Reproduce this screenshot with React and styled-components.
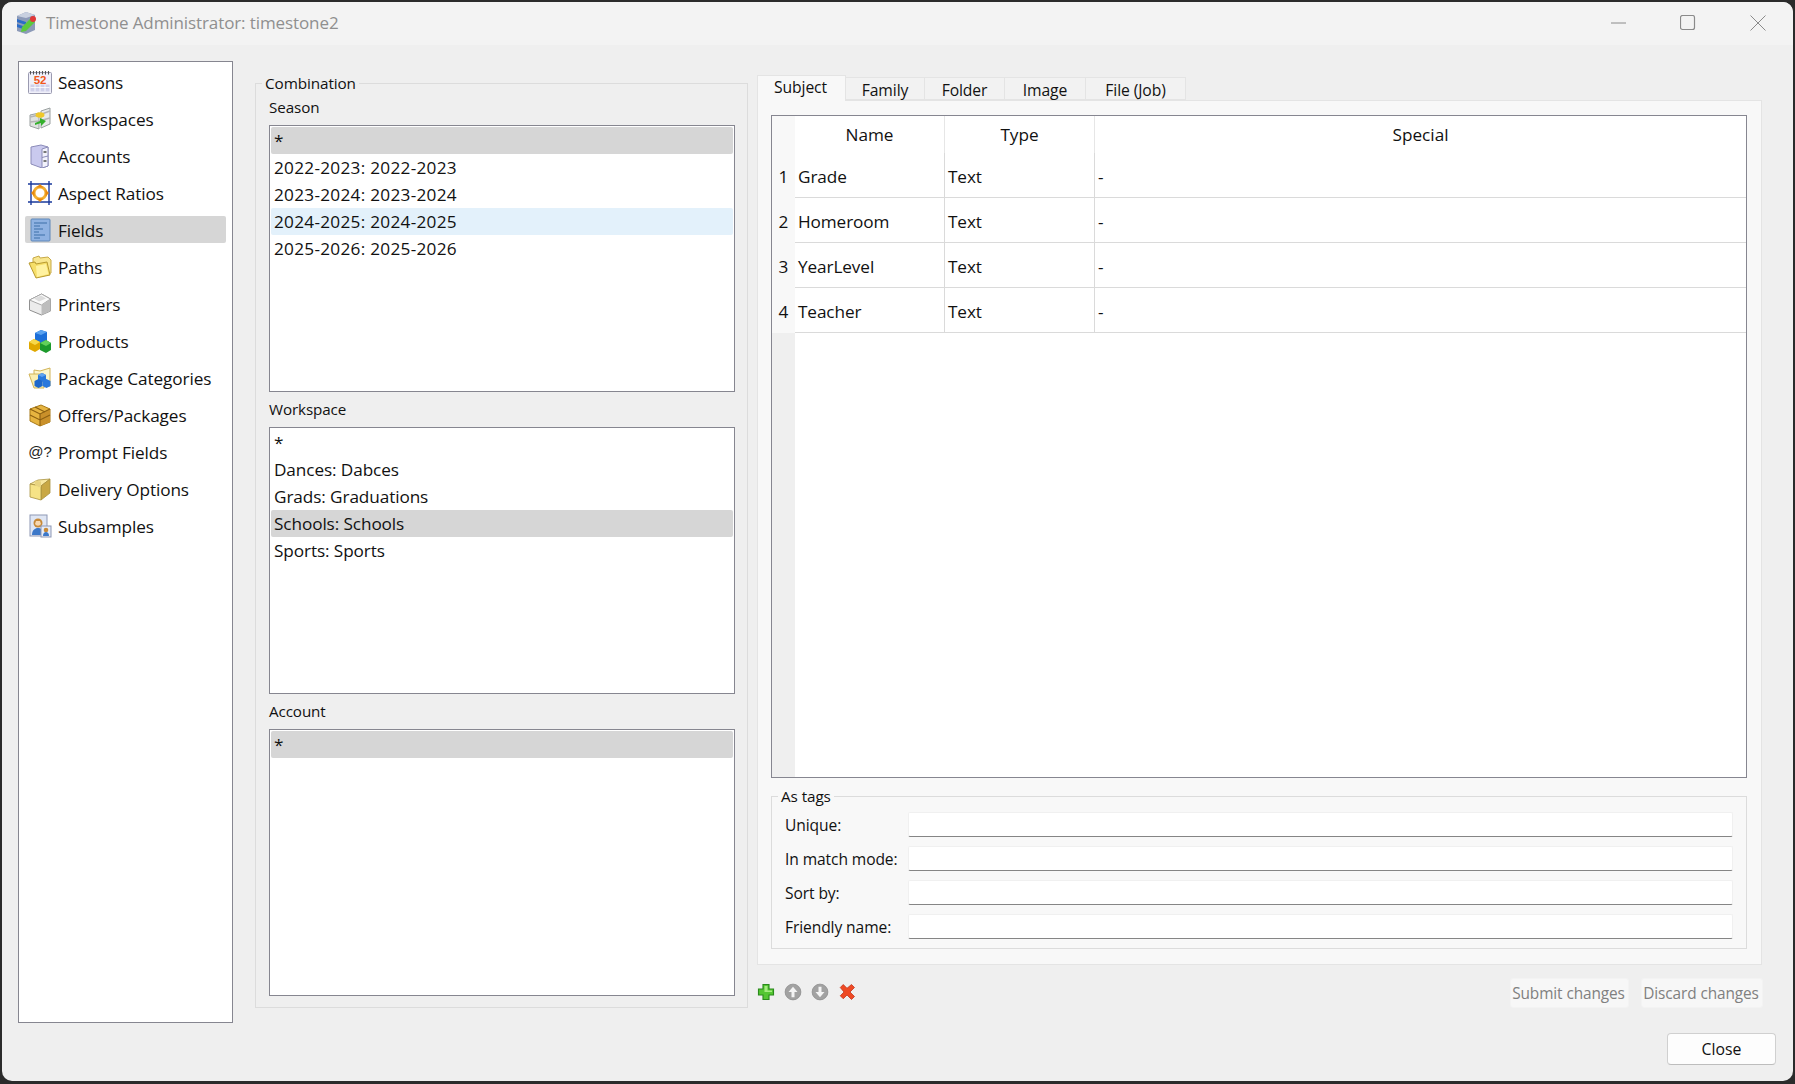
import React from 'react';
import styled, { createGlobalStyle } from 'styled-components';

const Global = createGlobalStyle`
  html, body { margin: 0; padding: 0; height: 100%; background: #2b2b2b; overflow: hidden; }
  #root { height: 100%; }
  * { box-sizing: border-box; }
  body { font-family: "Open Sans", "Noto Sans", sans-serif; font-size: 16px; color: #111; }
`;

const Screen = styled.div`
  width: 1795px; height: 1084px; padding: 2px 2px 3px 2px; background: #2b2b2b;
`;
const Win = styled.div`
  height: 100%; background: #efefef; border-radius: 10px; overflow: hidden;
  display: flex; flex-direction: column;
`;
const TitleBar = styled.header`
  height: 43px; flex: none; background: #f3f3f3; display: flex; align-items: center;
  padding: 0 0 2px 12px;
`;
const TitleIcon = styled.span` display: flex; width: 24px; height: 24px; margin-right: 8px; `;
const TitleText = styled.span`
  font-size: 17px; color: #8f8f8f; flex: 1; letter-spacing: -0.1px;
`;
const WinButton = styled.button`
  width: 70px; height: 41px; border: 0; background: none; padding: 0;
  display: flex; align-items: center; justify-content: center;
`;
const Body = styled.main`
  flex: 1; min-height: 0; display: flex; flex-direction: column;
  padding: 16px 16px 16px 16px;
`;
const Columns = styled.div` height: 962px; flex: none; display: flex; `;

const Sidebar = styled.nav`
  width: 215px; flex: none; height: 100%; background: #fff; border: 1px solid #868690;
  padding: 1px 6px 0 6px; display: flex; flex-direction: column;
`;
const NavItem = styled.div`
  height: 27px; margin: 5px 0; flex: none; display: flex; align-items: center;
  padding-left: 3px; border-radius: 2px; font-size: 17.2px; letter-spacing: -0.1px;
  background: ${p => (p.$active ? '#d6d6d6' : 'transparent')};
`;
const NavLabel = styled.span` padding-top: 1px; `;
const NavIcon = styled.span` width: 24px; height: 24px; flex: none; margin-right: 6px; display: flex; align-items: center; justify-content: center; `;
const AtGlyph = styled.span` font-size: 15px; font-family: "Liberation Sans", sans-serif; color: #222; `;

const Group = styled.fieldset`
  margin: 0; min-width: 0; border: 1px solid #dcdcdc; 
`;
const Legend = styled.legend`
  padding: 0 3px; line-height: 14px; height: 14px; font-size: 15.3px; letter-spacing: -0.1px;
  margin-left: -7px;
`;
const ComboWrap = styled.div` width: 493px; flex: none; margin-left: 22px; padding-top: 15px; height: 947px; display: flex; `;
const Combo = styled(Group)`
  width: 100%; padding: 0 12px 11px 13px; display: flex; flex-direction: column;
`;
const ListSection = styled.section` flex: 1; min-height: 0; display: flex; flex-direction: column; `;
const ListLabel = styled.div`
  height: 35px; flex: none; line-height: 34px; font-size: 15.2px; letter-spacing: -0.1px;
`;
const ListBox = styled.div`
  flex: 1; background: #fff; border: 1px solid #868690; padding: 1px 1px;
`;
const ListRow = styled.div`
  height: 27px; line-height: 28px; padding-left: 3px; font-size: 17.2px; border-radius: 2px;
  letter-spacing: ${p => p.$tracking}px;
  background: ${p => (p.$state === 'sel' ? '#d6d6d6' : p.$state === 'hover' ? '#e3f1fb' : 'transparent')};
`;

const RightCol = styled.section` width: 1005px; flex: none; margin-left: 9px; padding-top: 14px; display: flex; flex-direction: column; `;
const Tabs = styled.div` height: 25px; flex: none; display: flex; align-items: flex-end; position: relative; z-index: 1; `;
const Tab = styled.div`
  width: ${p => p.$w}px; height: ${p => (p.$active ? 26 : 23)}px;
  margin-bottom: ${p => (p.$active ? -1 : 0)}px;
  background: ${p => (p.$active ? '#f8f8f8' : '#f2f2f2')};
  border: 1px solid #e4e4e4; border-left-width: ${p => (p.$active ? 1 : 0)}px;
  border-bottom: ${p => (p.$active ? 0 : 1)}px solid #e4e4e4;
  font-size: 15.7px; letter-spacing: -0.1px; text-align: center; line-height: ${p => (p.$active ? 22 : 24)}px;
  ${p => p.$active && 'padding-right: 2px;'}
`;
const Panel = styled.div`
  height: 865px; flex: none; background: #f8f8f8; border: 1px solid #e4e4e4;
  padding: 14px 14px 16px 13px; display: flex; flex-direction: column;
`;
const TableFrame = styled.div`
  height: 663px; flex: none; background: #fff; border: 1px solid #868690; display: flex; flex-direction: column;
`;
const TRow = styled.div`
  display: flex; flex: none; height: ${p => (p.$head ? 37 : 45)}px;
`;
const RowHead = styled.div`
  width: 23px; flex: none; background: #f8f8f8; text-align: center; font-size: 17.2px; line-height: 47px;
  ${p => p.$head && 'line-height: 37px;'}
`;
const Cell = styled.div`
  width: ${p => (p.$w ? `${p.$w}px` : 'auto')}; flex: ${p => (p.$w ? 'none' : 1)};
  border-right: ${p => (p.$w ? '1px solid #dadada' : '0')};
  border-bottom: 1px solid #dadada;
  padding-left: 3px; font-size: 17.2px; line-height: 47px; letter-spacing: -0.1px;
`;
const HeadCell = styled.div`
  width: ${p => (p.$w ? `${p.$w}px` : 'auto')}; flex: ${p => (p.$w ? 'none' : 1)};
  border-right: ${p => (p.$w ? '1px solid #e6e6e6' : '0')};
  text-align: center; font-size: 17.2px; line-height: 38px;
`;
const Filler = styled.div` flex: 1; display: flex; `;
const FillerGutter = styled.div` width: 23px; background: #efefef; `;

const TagsWrap = styled.div` margin-top: 11px; height: 160px; flex: none; display: flex; `;
const Tags = styled(Group)` width: 100%; padding: 4px 13px 0 13px; display: flex; flex-direction: column; `;
const TagRow = styled.label` height: 34px; flex: none; display: flex; align-items: center; `;
const TagLabel = styled.span` width: 123px; flex: none; font-size: 15.6px; letter-spacing: -0.1px; padding-top: 1px; `;
const TagInput = styled.input`
  flex: 1; height: 25px; background: #fff; border: 1px solid #f0f0f0; border-bottom: 1px solid #858585; border-radius: 2px; outline: 0;
`;

const Toolbar = styled.div` flex: 1; display: flex; align-items: flex-start; padding-top: 13px; `;
const IconBtn = styled.button`
  border: 0; padding: 0; background: none; width: 18px; height: 18px; margin: 5px 9px 0 0; display: flex;
`;
const Spacer = styled.div` flex: 1; `;
const MutedBtn = styled.button`
  height: 30px; width: ${p => p.$w}px; margin-left: 13px; margin-right: -1px; background: #f7f7f7; border: 1px solid #f3f3f3; border-radius: 3px;
  color: #808080; font: inherit; font-size: 15.4px; letter-spacing: -0.1px; padding: 0 2px 0 0;
`;
const Footer = styled.footer` flex: 1; display: flex; justify-content: flex-end; align-items: flex-end; padding-right: 1px; `;
const CloseBtn = styled.button`
  width: 109px; height: 32px; background: #fdfdfd; border: 1px solid #d0d0d0; border-bottom-color: #bdbdbd; border-radius: 4px;
  font: inherit; font-size: 15.8px; color: #111; padding: 0;
`;

const I = ({ children, s = 24 }) => <svg width={s} height={s} viewBox="0 0 24 24">{children}</svg>;

const icons = {
  Seasons: <I>
    <rect x="0.500" y="2.500" width="23" height="21" rx="1" fill="#f0f0fa" stroke="#9a9ab0" />
    <rect x="2.500" y="14.500" width="19" height="7" fill="#cfd0ea" />
    <path d="M2.500 17.500h19M7 14.500v7M12 14.500v7M17 14.500v7" stroke="#fff" strokeWidth=".8" />
    <text x="12" y="13.500" textAnchor="middle" fontFamily="Liberation Sans" fontWeight="700" fontSize="11.500" fill="#f0581c">52</text>
    <path d="M2.500 1v3.500M5.500 1v3.500M8.500 1v3.500M11.500 1v3.500M14.500 1v3.500M17.500 1v3.500M20.500 1v3.500" stroke="#555" strokeWidth="1.100" />
  </I>,
  Workspaces: <I>
    <path d="M2 8l9-2v16l-9-3z" fill="#dfe2e0" stroke="#9aa0a0" />
    <path d="M13 4l9-3v16l-9 4z" fill="#e8eaea" stroke="#9aa0a0" />
    <path d="M2 10l9-2 11-4M2 15l9-1 11-3" stroke="#b4b4b4" strokeWidth="1.400" fill="none" />
    <ellipse cx="12" cy="8" rx="4.500" ry="2.800" fill="#f0c828" />
    <path d="M7 16l5-2v-3l6 3-5 5v-3l-6 2z" fill="#34b02c" />
  </I>,
  Accounts: <I>
    <path d="M3 3l10-2 7 2v19l-6 2-11-4z" fill="#c9c9ee" stroke="#8b8bb8" />
    <path d="M14 5l6-2v19l-6 2z" fill="#f2f2fc" stroke="#8b8bb8" />
    <path d="M14 13.500l6-1.500" stroke="#8b8bb8" />
    <rect x="15.500" y="7" width="3" height="2" fill="#777" /><rect x="15.500" y="16" width="3" height="2" fill="#777" />
  </I>,
  'Aspect Ratios': <I>
    <path d="M3 0v24M21 0v24M0 3h24M0 21h24" stroke="#1a3a9c" strokeWidth="1.400" />
    <circle cx="12" cy="12" r="6" fill="none" stroke="#f4b030" strokeWidth="3" />
    <path d="M12 3l3.500 3.500h-7zM12 21l3.500-3.500h-7zM3 12l3.500-3.500v7zM21 12l-3.500-3.500v7z" fill="#e88a10" />
  </I>,
  Fields: <I>
    <rect x="3" y="1" width="19" height="22" rx="1" fill="#8fb2e2" stroke="#5d86b8" />
    <path d="M6 5h13M6 8h6M6 11h9M6 14h5M6 17h11M6 20h6" stroke="#3d6ea8" strokeWidth="1.200" />
  </I>,
  Paths: <I>
    <path d="M5 7V3l6-2 1 2 8-1 3 3v13l-5 2H9z" fill="#f8e68e" stroke="#c8aa48" />
    <path d="M1 8l6-1 1 2 11-2 3 13-14 3z" fill="#f6de68" stroke="#b89a30" />
    <path d="M8 11l10-2 2.500 10L9 22z" fill="#fff2a0" />
  </I>,
  Printers: <I>
    <path d="M1.500 8l12-6 9 5v12l-9 4-12-5z" fill="#ececec" stroke="#909090" />
    <path d="M1.500 8l12 5 9-6-9-5z" fill="#fafafa" stroke="#a8a8a8" />
    <path d="M6 6.500l7-3 5 3-7 3z" fill="#dcdcdc" />
    <path d="M13.500 13l9-6v12l-9 4z" fill="#bdbdbd" />
  </I>,
  Products: <I>
    <path d="M7 4l6-3 6 2v9l-6 3-6-2z" fill="#1d6fd8" /><path d="M7 4l6 2 6-3-6-2z" fill="#5aa2f0" />
    <path d="M1 13l5-3 6 3v7l-5 3-6-3z" fill="#e0a800" /><path d="M1 13l6 3 5-3-6-3z" fill="#f7d84a" />
    <path d="M12 14l6-3 5 3v7l-5 3-6-3z" fill="#1c9a2c" /><path d="M12 14l6 3 5-3-5-3z" fill="#62d05a" />
  </I>,
  'Package Categories': <I>
    <path d="M6 7V4l6 1 10-3v18H8z" fill="#fdf6cc" stroke="#d2b458" />
    <path d="M1 8h15v14H6z" fill="#faeeb0" stroke="#d2b458" />
    <path d="M10 9l4-2 4 2v5l-4 2-4-2z" fill="#2a78dc" />
    <path d="M6.500 15l4-2 4 2v5l-4 2-4-2z" fill="#1e68cc" /><path d="M14.500 15l4-2 4 2v5l-4 2-4-2z" fill="#2a78dc" />
    <path d="M10 9l4 2 4-2-4-2z" fill="#62a4f0" />
  </I>,
  'Offers/Packages': <I>
    <path d="M2 6l11-4 9 4v13l-10 4-10-5z" fill="#e6b440" stroke="#a87a18" />
    <path d="M12 11l10-5v13l-10 4z" fill="#c9902a" />
    <path d="M12 11v12M7 4l10 5M2 12l10 5 10-5M2 6l10 5 10-5" stroke="#8a5e10" strokeWidth="1.100" fill="none" />
  </I>,
  'Delivery Options': <I>
    <path d="M2 7l11 2 9-7-12 1z" fill="#f8e8a0" stroke="#a89240" strokeWidth=".8" />
    <path d="M13 9l9-7v14l-9 7z" fill="#c9a844" stroke="#a89240" strokeWidth=".8" />
    <path d="M2 7l11 2v14l-11-3z" fill="#f6e386" stroke="#a89240" strokeWidth=".8" />
    <path d="M7 3.500l6 1v6l-1-1-1 1-1-1-3-1z" fill="#e8d480" />
  </I>,
  Subsamples: <I>
    <rect x="2" y="1" width="17" height="21" fill="#dfe6f4" stroke="#8d97b4" />
    <circle cx="10" cy="9" r="4.500" fill="#c88a38" /><path d="M7 10a3.500 3.500 0 0 0 6 0l-1-3H8z" fill="#f8d8b0" />
    <path d="M4 21c0-5 3-7 6-7s6 2 6 7z" fill="#3c78c8" />
    <rect x="13" y="12" width="10" height="11" fill="#e6ecf8" stroke="#8d97b4" />
    <circle cx="18" cy="16" r="2.300" fill="#c88a38" /><path d="M15 22c0-3 1.500-4 3-4s3 1 3 4z" fill="#3c78c8" />
  </I>,
};

const navItems = ['Seasons', 'Workspaces', 'Accounts', 'Aspect Ratios', 'Fields', 'Paths', 'Printers', 'Products', 'Package Categories', 'Offers/Packages', 'Prompt Fields', 'Delivery Options', 'Subsamples'];

const lists = [
  { label: 'Season', tracking: 0.28, rows: [['*', 'sel'], ['2022-2023: 2022-2023'], ['2023-2024: 2023-2024'], ['2024-2025: 2024-2025', 'hover'], ['2025-2026: 2025-2026']] },
  { label: 'Workspace', tracking: -0.1, rows: [['*'], ['Dances: Dabces'], ['Grads: Graduations'], ['Schools: Schools', 'sel'], ['Sports: Sports']] },
  { label: 'Account', tracking: 0, rows: [['*', 'sel']] },
];

const tabs = [['Subject', 89, true], ['Family', 79], ['Folder', 80], ['Image', 81], ['File (Job)', 100]];
const fields = ['Grade', 'Homeroom', 'YearLevel', 'Teacher'];
const tags = ['Unique:', 'In match mode:', 'Sort by:', 'Friendly name:'];

export default function App() {
  return (
    <Screen>
      <Global />
      <Win>
        <TitleBar>
          <TitleIcon>
            <I>
              <path d="M3 5l9-4 9 3v15l-9 4-9-3z" fill="#8c9ab8" />
              <path d="M3 5l9-4 9 3-9 3z" fill="#c8d0e0" />
              <path d="M3 8l9 3v3l-9-3zM3 13l9 3v3l-9-3z" fill="#2a6cc8" />
              <path d="M7 21l1-5 9-9 4 4-9 9z" fill="#5cc83c" />
              <circle cx="19" cy="8" r="3" fill="#e03838" />
            </I>
          </TitleIcon>
          <TitleText>Timestone Administrator: timestone2</TitleText>
          <WinButton aria-label="Minimize"><svg width="16" height="16"><path d="M1 8h15" stroke="#8a8a8a" /></svg></WinButton>
          <WinButton aria-label="Maximize"><svg width="16" height="16"><rect x=".5" y=".5" width="14" height="14" rx="2" fill="none" stroke="#8a8a8a" strokeWidth="1.200" /></svg></WinButton>
          <WinButton aria-label="Close"><svg width="16" height="16"><path d="M.5.5l15 15M15.500.5l-15 15" stroke="#8a8a8a" /></svg></WinButton>
        </TitleBar>
        <Body>
          <Columns>
            <Sidebar>
              {navItems.map(n => (
                <NavItem key={n} $active={n === 'Fields'}>
                  <NavIcon>{icons[n] || <AtGlyph>@?</AtGlyph>}</NavIcon>
                  <NavLabel>{n}</NavLabel>
                </NavItem>
              ))}
            </Sidebar>
            <ComboWrap>
              <Combo>
                <Legend>Combination</Legend>
                {lists.map(l => (
                  <ListSection key={l.label}>
                    <ListLabel>{l.label}</ListLabel>
                    <ListBox>
                      {l.rows.map(([t, s]) => <ListRow key={t} $state={s} $tracking={l.tracking}>{t}</ListRow>)}
                    </ListBox>
                  </ListSection>
                ))}
              </Combo>
            </ComboWrap>
            <RightCol>
              <Tabs>
                {tabs.map(([t, w, a]) => <Tab key={t} $w={w} $active={a}>{t}</Tab>)}
              </Tabs>
              <Panel>
                <TableFrame>
                  <TRow $head>
                    <RowHead $head />
                    <HeadCell $w={150}>Name</HeadCell>
                    <HeadCell $w={150}>Type</HeadCell>
                    <HeadCell>Special</HeadCell>
                  </TRow>
                  {fields.map((f, i) => (
                    <TRow key={f}>
                      <RowHead>{i + 1}</RowHead>
                      <Cell $w={150}>{f}</Cell>
                      <Cell $w={150}>Text</Cell>
                      <Cell>-</Cell>
                    </TRow>
                  ))}
                  <Filler><FillerGutter /></Filler>
                </TableFrame>
                <TagsWrap>
                  <Tags>
                    <Legend>As tags</Legend>
                    {tags.map(t => (
                      <TagRow key={t}>
                        <TagLabel>{t}</TagLabel>
                        <TagInput />
                      </TagRow>
                    ))}
                  </Tags>
                </TagsWrap>
              </Panel>
              <Toolbar>
                <IconBtn aria-label="Add">
                  <I s={18}>
                    <path d="M8 2h8v6h6v8h-6v6H8v-6H2V8h6z" fill="#54c632" stroke="#2a8a1c" strokeWidth="1.500" />
                    <path d="M10 4h4v6h6v2H10z" fill="#a4ec80" />
                  </I>
                </IconBtn>
                <IconBtn aria-label="Up">
                  <I s={18}>
                    <circle cx="12" cy="12" r="10.500" fill="#a2a2a2" stroke="#888" />
                    <path d="M12 5l6 7h-4v7h-4v-7H6z" fill="#f4f4f4" />
                  </I>
                </IconBtn>
                <IconBtn aria-label="Down">
                  <I s={18}>
                    <circle cx="12" cy="12" r="10.500" fill="#a2a2a2" stroke="#888" />
                    <path d="M12 19l6-7h-4V5h-4v7H6z" fill="#f4f4f4" />
                  </I>
                </IconBtn>
                <IconBtn aria-label="Delete">
                  <I s={18}>
                    <path d="M3 6l4-4 5 5 6-5 4 4-6 6 6 6-4 4-6-6-5 5-4-4 5-5z" fill="#ee4a24" stroke="#c03018" />
                  </I>
                </IconBtn>
                <Spacer />
                <MutedBtn $w={119}>Submit changes</MutedBtn>
                <MutedBtn $w={122}>Discard changes</MutedBtn>
              </Toolbar>
            </RightCol>
          </Columns>
          <Footer>
            <CloseBtn>Close</CloseBtn>
          </Footer>
        </Body>
      </Win>
    </Screen>
  );
}
